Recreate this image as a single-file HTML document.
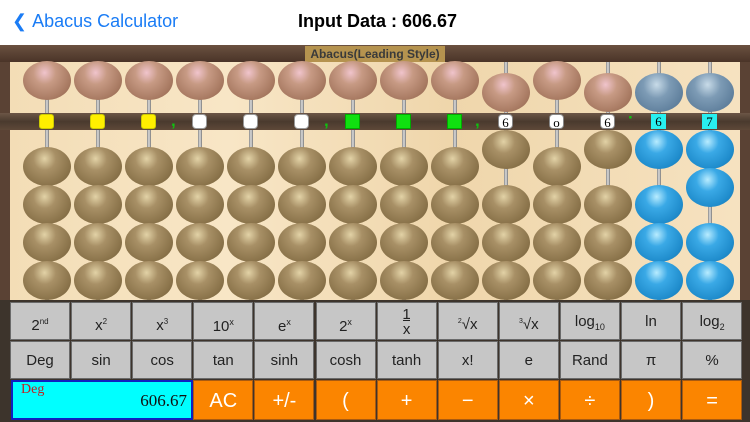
<!DOCTYPE html>
<html><head><style>
*{margin:0;padding:0;box-sizing:border-box}
body{width:750px;height:422px;overflow:hidden;background:#fff;font-family:"Liberation Sans",sans-serif;position:relative}
.hdr{position:absolute;top:0;left:0;width:750px;height:45px;background:#fff}
.back{position:absolute;left:12px;top:11px;color:#1a7cf5;font-size:18px}
.title{position:absolute;left:298px;top:11px;font-size:18px;font-weight:bold;color:#000}
.frame{position:absolute;top:45px;left:0;width:750px;height:257px;background:#5a4234}
.inner{position:absolute;top:17px;left:10px;width:730px;height:240px;background:linear-gradient(90deg,#f3ddb6,#f8e6c6 30%,#efd6ab 60%,#f6e2c0)}
.topbar{position:absolute;top:45px;left:0;width:750px;height:17px;background:linear-gradient(#6b5140,#4a3428)}
.lbl{position:absolute;top:46px;left:305px;width:140px;height:16px;background:#b5934f;color:#3a3a3a;font-size:12px;font-weight:bold;text-align:center;line-height:16px}
.rod{position:absolute;width:4px;background:linear-gradient(90deg,#888,#ddd,#777)}
.beam{position:absolute;top:113px;left:0;width:750px;height:17px;background:linear-gradient(#6c5646,#4a3a2e 50%,#5e4838)}
.b{position:absolute;width:48px;height:39px;border-radius:50%}
.up{background:radial-gradient(ellipse at 45% 30%,#f0c4cc 0%,#c79a84 30%,#a87a62 70%,#8a5e48 100%)}
.lo{background:radial-gradient(ellipse at 45% 30%,#e2d2a6 0%,#a89066 30%,#8a734a 70%,#6e5a36 100%)}
.bu{background:radial-gradient(ellipse at 45% 30%,#c8dbe8 0%,#7d9bb5 35%,#5f7f9c 75%,#4a6680 100%)}
.bl{background:radial-gradient(ellipse at 45% 30%,#b8ecff 0%,#3aa9e6 30%,#1f8ccc 70%,#176fa6 100%)}
.m{position:absolute;width:15px;height:15px;top:114px;font-family:"Liberation Serif",serif;font-size:13px;text-align:center;line-height:15px;color:#000}
.c{position:absolute;top:111px;color:#10c010;font-weight:bold;font-size:17px}
.k{position:absolute;height:38px;width:60px;background:#c6c6c6;border:1px solid #6a6a6a;color:#222;font-size:15px;text-align:center;line-height:38px}
.o{background:#fb8500;border-color:#a85a10;color:#fff;font-size:20px}
.pad{position:absolute;top:300px;left:0;width:750px;height:122px;background:#3d342c}
</style></head><body>
<div class="hdr"><div class="back">&#10094;&nbsp;Abacus Calculator</div><div class="title">Input Data : 606.67</div></div>
<div class="frame"><div class="inner"></div></div>
<div class="topbar"></div>
<div class="lbl">Abacus(Leading Style)</div>
<div id="ab"></div>
<div class="pad"></div>
<div id="keys"></div>
<script>
var h='';var xs=[];for(var i=0;i<14;i++)xs.push(47+i*51);
var vals=[0,0,0,0,0,0,0,0,0,6,0,6,6,7];
for(var i=0;i<14;i++){var x=xs[i];h+='<div class="rod" style="left:'+(x-2)+'px;top:62px;height:238px"></div>';}
h+='<div class="beam"></div>';
for(var i=0;i<14;i++){var x=xs[i],v=vals[i];var blue=i>=12;
var up=v>=5;var uy=up?73:61;
h+='<div class="b '+(blue?'bu':'up')+'" style="left:'+(x-24)+'px;top:'+uy+'px"></div>';
var n=v%5;
for(var j=0;j<4;j++){var y;if(j<n)y=130+j*38;else y=300-38*(4-j)-1;
h+='<div class="b '+(blue?'bl':'lo')+'" style="left:'+(x-24)+'px;top:'+y+'px"></div>';}}
var marks=['y','y','y','w','w','w','g','g','g','6','o','6','6','7'];
for(var i=0;i<14;i++){var x=xs[i]-8,m=marks[i],s='';
if(m=='y')s='background:#ffef00;border:1px solid #cc0;border-radius:3px';
else if(m=='w')s='background:#fff;border:1px solid #999;border-radius:4px';
else if(m=='g')s='background:#10e010;border:1px solid #0a0';
else if(i>=12)s='background:#28f0f0';
else s='background:#fff;border:1px solid #888;border-radius:4px';
h+='<div class="m" style="left:'+x+'px;'+s+'">'+(m.length==1&&'ywg'.indexOf(m)>=0?'':m)+'</div>';}
[171,324,475].forEach(function(x){h+='<div class="c" style="left:'+x+'px">,</div>'});
h+='<div class="c" style="left:628px;top:108px">·</div>';
document.getElementById('ab').innerHTML=h;
var r1=['2<sup style="font-size:8px">nd</sup>','x<sup style="font-size:8px">2</sup>','x<sup style="font-size:8px">3</sup>','10<sup style="font-size:9px">x</sup>','e<sup style="font-size:9px">x</sup>','2<sup style="font-size:9px">x</sup>','<span style="display:inline-block;line-height:15px;vertical-align:middle">1<br><span style="border-top:1px solid #222">x</span></span>','<sup style="font-size:7px">2</sup>√x','<sup style="font-size:7px">3</sup>√x','log<sub style="font-size:9px">10</sub>','ln','log<sub style="font-size:9px">2</sub>'];
var r2=['Deg','sin','cos','tan','sinh','cosh','tanh','x!','e','Rand','π','%'];
var r3=['AC','+/-','(','+','−','×','÷',')','='];
var k='';
for(var c=0;c<12;c++){var x=10+c*61.1;
k+='<div class="k" style="left:'+x+'px;top:302px">'+r1[c]+'</div>';
k+='<div class="k" style="left:'+x+'px;top:341px">'+r2[c]+'</div>';}
for(var c=0;c<9;c++){var x=10+(c+3)*61.1;k+='<div class="k o" style="left:'+x+'px;top:380px;height:40px;line-height:40px">'+r3[c]+'</div>';}
k+='<div style="position:absolute;left:11px;top:380px;width:182px;height:40px;background:#00ffff;border:2px solid #1020c0"><span style="position:absolute;left:8px;top:0;color:#c02020;font-family:Liberation Serif,serif;font-size:14px">Deg</span><span style="position:absolute;right:4px;top:9px;font-family:Liberation Serif,serif;font-size:17px;color:#111">606.67</span></div>';
document.getElementById('keys').innerHTML=k;
</script>
</body></html>
